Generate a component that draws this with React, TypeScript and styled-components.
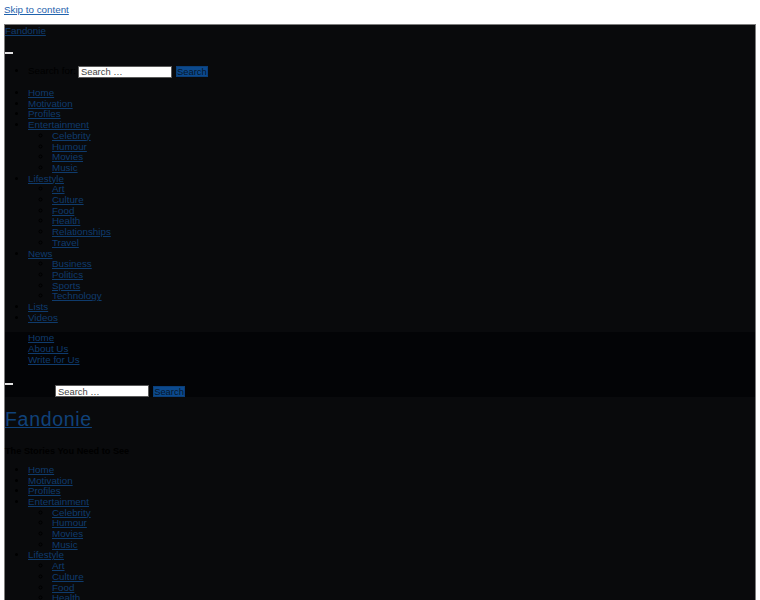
import React from "react";
import styled, { createGlobalStyle } from "styled-components";

const Global = createGlobalStyle`
  html, body { background: #ffffff; }
  body {
    margin: 5px 4px 4px 4px;
    font-family: "Liberation Sans", Arial, sans-serif;
    font-size: 9.8px;
    line-height: 10.7px;
    color: #000000;
  }
  * { box-sizing: border-box; }
`;

const SkipLink = styled.a`
  display: block;
  color: #1f62ad;
  text-decoration: underline;
  margin-bottom: 8.3px;
  width: max-content;
`;

const Page = styled.div`
  border: 1px solid #7d7d7d;
  border-bottom: none;
  background: #090a0c;
`;

const MobileHeader = styled.div`
  padding-top: 1px;
  padding-bottom: 9px;
`;

const SmallTitle = styled.a`
  display: block;
  width: max-content;
  color: #0f3b6c;
  text-decoration: underline;
`;

const Toggle = styled.button<{ $top: number }>`
  display: block;
  width: 8px;
  height: 2.5px;
  padding: 0;
  border: none;
  background: #e2e2e2;
  margin: ${(p) => p.$top}px 0 0 0;
`;

const List = styled.ul<{ $top?: number; $nested?: boolean; $plain?: boolean }>`
  margin: ${(p) => (p.$top ?? 0)}px 0 0 0;
  padding-left: ${(p) => (p.$nested ? 24 : 23)}px;
  list-style: ${(p) => (p.$plain ? "none" : p.$nested ? "circle" : "disc")};
  color: #000000;
`;

const Item = styled.li`
  line-height: 10.7px;
`;

const NavLink = styled.a`
  color: #0f3b6c;
  text-decoration: underline;
`;

const SearchItem = styled.li`
  height: 14px;
`;

const SearchForm = styled.form<{ $indent?: number }>`
  display: flex;
  align-items: center;
  gap: 4px;
  height: 14px;
  padding-left: ${(p) => p.$indent ?? 0}px;
`;

const Label = styled.label`
  display: flex;
  align-items: center;
  gap: 2px;
  color: #000000;
`;

const Input = styled.input`
  width: 94px;
  height: 12px;
  padding: 0 2px;
  border: 1px solid #5a5a5a;
  background: #ffffff;
  font-family: "Liberation Sans", Arial, sans-serif;
  font-size: 9.4px;
  color: #222;
  &::placeholder { color: #444; }
`;

const SearchButton = styled.button`
  height: 11px;
  width: 32px;
  padding: 0;
  border: 1px solid #0a3f7a;
  background: #0c4a8e;
  color: #06162a;
  font-family: "Liberation Sans", Arial, sans-serif;
  font-size: 9.4px;
  line-height: 9px;
`;

const SecondaryBar = styled.div`
  background: #030406;
  height: 65px;
  padding-top: 1px;
  display: flex;
  flex-direction: column;
`;

const MainHeader = styled.div`
  padding-top: 12px;
`;

const BigTitle = styled.a`
  display: block;
  width: max-content;
  font-size: 19.5px;
  line-height: 21.8px;
  letter-spacing: 0.7px;
  color: #10427a;
  text-decoration: underline;
`;

const Tagline = styled.p`
  margin: 14.6px 0 0 0;
  font-weight: bold;
  font-size: 9.2px;
  line-height: 10.7px;
  color: #000000;
`;

type NavNode = { label: string; children?: string[] };

const nav: NavNode[] = [
  { label: "Home" },
  { label: "Motivation" },
  { label: "Profiles" },
  { label: "Entertainment", children: ["Celebrity", "Humour", "Movies", "Music"] },
  { label: "Lifestyle", children: ["Art", "Culture", "Food", "Health", "Relationships", "Travel"] },
  { label: "News", children: ["Business", "Politics", "Sports", "Technology"] },
  { label: "Lists" },
  { label: "Videos" },
];

function NavTree({ top }: { top: number }) {
  return (
    <List $top={top}>
      {nav.map((n) => (
        <Item key={n.label}>
          <NavLink href="#">{n.label}</NavLink>
          {n.children && (
            <List $nested>
              {n.children.map((c) => (
                <Item key={c}>
                  <NavLink href="#">{c}</NavLink>
                </Item>
              ))}
            </List>
          )}
        </Item>
      ))}
    </List>
  );
}

function Search({ withLabel, indent }: { withLabel?: boolean; indent?: number }) {
  return (
    <SearchForm $indent={indent} onSubmit={(e) => e.preventDefault()}>
      {withLabel ? (
        <Label>
          Search for:
          <Input placeholder="Search …" />
        </Label>
      ) : (
        <Input placeholder="Search …" />
      )}
      <SearchButton type="submit">Search</SearchButton>
    </SearchForm>
  );
}

export default function App() {
  return (
    <>
      <Global />
      <SkipLink href="#">Skip to content</SkipLink>
      <Page>
        <MobileHeader>
          <SmallTitle href="#">Fandonie</SmallTitle>
          <Toggle $top={14.8} aria-label="menu" />
          <List $top={10.5}>
            <SearchItem>
              <Search withLabel />
            </SearchItem>
          </List>
          <NavTree top={9.5} />
        </MobileHeader>
        <SecondaryBar>
          <List $plain>
            <Item><NavLink href="#">Home</NavLink></Item>
            <Item><NavLink href="#">About Us</NavLink></Item>
            <Item><NavLink href="#">Write for Us</NavLink></Item>
          </List>
          <Toggle $top={17} aria-label="menu" />
          <Search indent={50} />
        </SecondaryBar>
        <MainHeader>
          <BigTitle href="#">Fandonie</BigTitle>
          <Tagline>The Stories You Need to See</Tagline>
          <NavTree top={8.3} />
        </MainHeader>
      </Page>
    </>
  );
}
